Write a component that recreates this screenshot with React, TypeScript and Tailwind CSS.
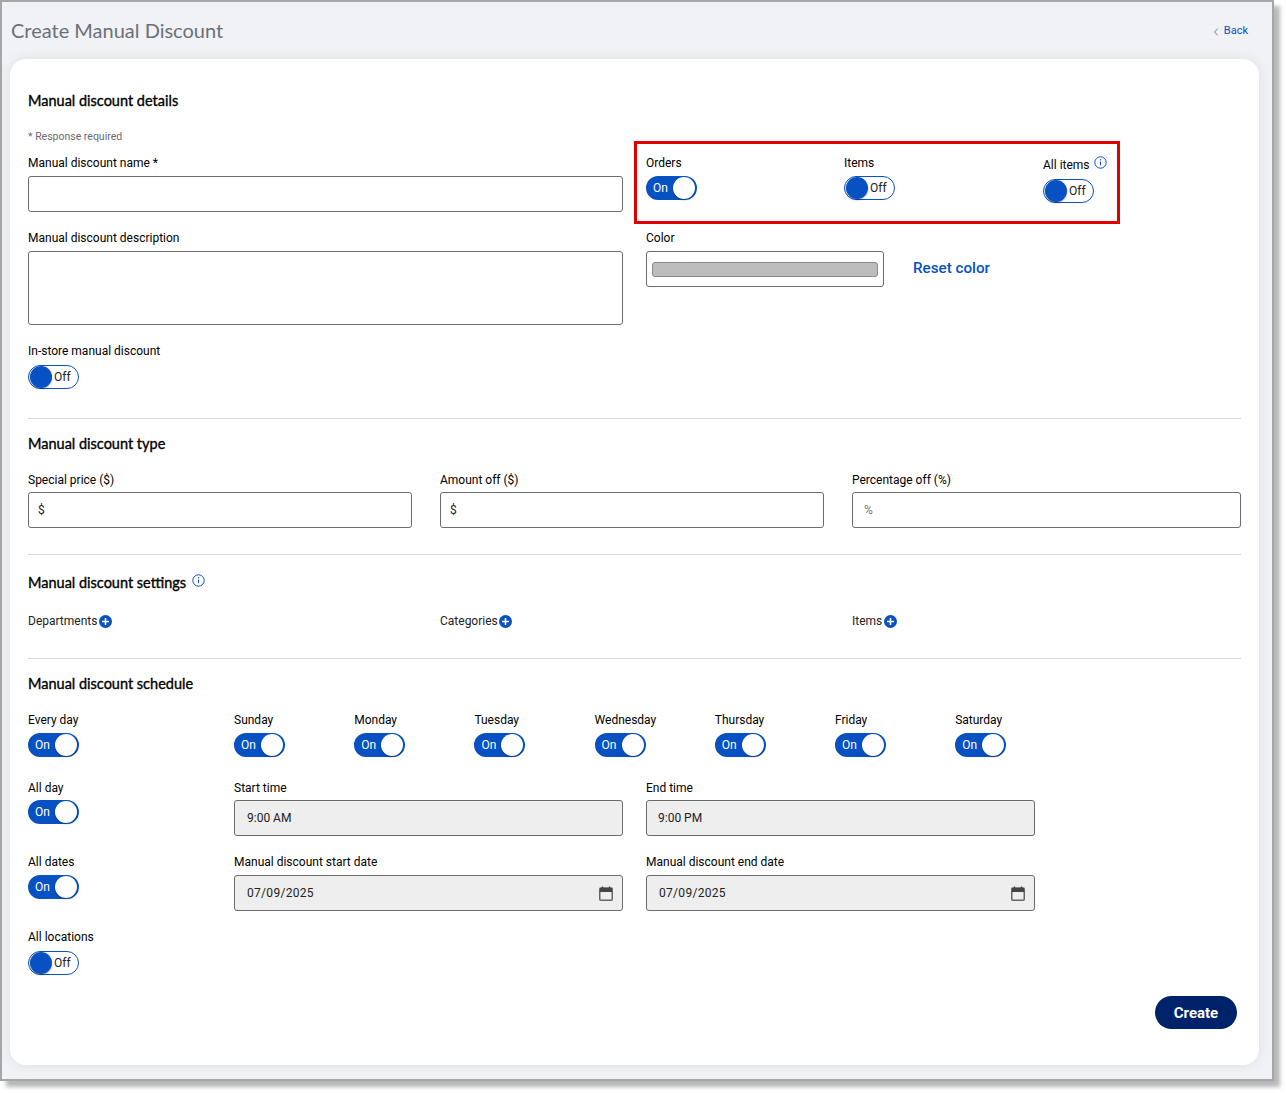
import { ChevronLeft } from "lucide-react";

const headingFont = "font-['Lato',sans-serif]";

function Toggle({ on }: { on: boolean }) {
  if (on) {
    return (
      <div className="flex h-[24px] w-[51px] items-center justify-between rounded-full border-2 border-[#0751c2] bg-[#0751c2] pl-[5px] text-[12px] text-white">
        <span>On</span>
        <span className="h-[22px] w-[22px] rounded-full bg-white shadow-[0_1px_2px_rgba(0,0,0,0.3)]" />
      </div>
    );
  }
  return (
    <div className="flex h-[24px] w-[51px] items-center gap-[2px] rounded-full border border-[#0751c2] bg-white pl-[1px] text-[12px] text-[#222]">
      <span className="h-[22px] w-[22px] rounded-full bg-[#0751c2] shadow-[0_1px_2px_rgba(0,0,0,0.3)]" />
      <span>Off</span>
    </div>
  );
}

function InfoIcon() {
  return (
    <svg width="13" height="13" viewBox="0 0 13 13" fill="none" className="text-[#0751c2]">
      <circle cx="6.5" cy="6.5" r="5.7" stroke="currentColor" />
      <path d="M6.5 5.6v3.6" stroke="currentColor" strokeWidth="1.1" />
      <circle cx="6.5" cy="3.8" r="0.7" fill="currentColor" />
    </svg>
  );
}

function PlusIcon() {
  return (
    <span className="flex h-[13px] w-[13px] items-center justify-center rounded-full bg-[#0751c2]">
      <svg width="9" height="9" viewBox="0 0 9 9">
        <path d="M4.5 1v7M1 4.5h7" stroke="white" strokeWidth="1.6" />
      </svg>
    </span>
  );
}

function CalendarIcon() {
  return (
    <svg width="14" height="15" viewBox="0 0 14 15" fill="none">
      <rect x="0.75" y="2" width="12.5" height="12.25" rx="1" stroke="#666" strokeWidth="1.5" />
      <rect x="1" y="2" width="12" height="4" fill="#444" />
      <path d="M3.5 0.5v2M10.5 0.5v2" stroke="#444" strokeWidth="1.4" />
    </svg>
  );
}

function Label({ children }: { children: React.ReactNode }) {
  return <div className="h-[14px] text-[12px] leading-[14px] text-black">{children}</div>;
}

function Field({ value, muted, disabled, calendar, className }: { value?: string; muted?: boolean; disabled?: boolean; calendar?: boolean; className?: string }) {
  return (
    <div
      className={`flex h-[36px] items-center justify-between rounded-[3px] border border-[#6b6b6b] pr-[9px] pl-[9px] text-[12px] ${disabled ? "bg-[#eeeeee]" : "bg-white"} ${muted ? "text-[#777]" : "text-[#222]"} ${className ?? ""}`}
    >
      <span>{value}</span>
      {calendar && <CalendarIcon />}
    </div>
  );
}

function Heading({ children }: { children: React.ReactNode }) {
  return <h2 className={`${headingFont} h-[20px] pt-[2px] text-[14.5px] leading-[18px] font-normal text-black [-webkit-text-stroke:0.35px_#000]`}>{children}</h2>;
}

const days = ["Sunday", "Monday", "Tuesday", "Wednesday", "Thursday", "Friday", "Saturday"];

export default function App() {
  return (
    <div className="h-[1093px] w-[1286px] bg-white font-['Roboto',sans-serif]">
      <div className="h-[1081px] w-[1274px] border-2 border-[#a6a6a6] bg-[#f0f2f6] px-[8px] shadow-[6px_6px_4px_rgba(0,0,0,0.28)]">
        <div className="flex h-[57px] items-center justify-between pr-[16px]">
          <h1 className={`${headingFont} pb-[2px] pl-[1px] text-[20px] text-[#6b7076]`}>Create Manual Discount</h1>
          <a className="mt-[2px] flex items-center gap-[2px] text-[11px] text-[#0751c2]">
            <ChevronLeft size={12} className="text-[#777]" />
            Back
          </a>
        </div>

        <div className="h-[1006px] w-[1249px] rounded-[16px] bg-white px-[18px] pt-[31px] shadow-[0_0_14px_rgba(0,0,0,0.08)]">
          <Heading>Manual discount details</Heading>

          <div className="grid grid-cols-[595px_1fr] gap-x-[23px]">
            <div>
              <div className="mt-[20px] text-[10.5px] leading-[14px] text-[#6b6b6b]">* Response required</div>
              <div className="mt-[12px]"><Label>Manual discount name *</Label></div>
              <Field className="mt-[6px]" />
            </div>
            <div className="mt-[31px] -mb-[12px] -ml-[12px] flex h-[83px] w-[486px] border-[3px] border-[#e00000] pt-[12px] pl-[9px]">
              <div className="w-[198px]">
                <Label>Orders</Label>
                <div className="mt-[6px]"><Toggle on /></div>
              </div>
              <div className="w-[199px]">
                <Label>Items</Label>
                <div className="mt-[6px]"><Toggle on={false} /></div>
              </div>
              <div>
                <div className="flex gap-[4px] pt-[2px]">
                  <Label>All items</Label>
                  <span className="-mt-[2px]"><InfoIcon /></span>
                </div>
                <div className="mt-[7px]"><Toggle on={false} /></div>
              </div>
            </div>
          </div>

          <div className="mt-[19px] grid grid-cols-[595px_1fr] gap-x-[23px]">
            <div>
              <Label>Manual discount description</Label>
              <div className="mt-[6px] h-[74px] rounded-[3px] border border-[#6b6b6b] bg-white" />
            </div>
            <div>
              <Label>Color</Label>
              <div className="mt-[6px] flex items-center gap-[29px]">
                <div className="flex h-[36px] w-[238px] items-center rounded-[3px] border border-[#6b6b6b] px-[5px]">
                  <div className="h-[15px] w-full rounded-[3px] border border-[#8a8a8a] bg-[#bdbdbd]" />
                </div>
                <a className="mb-[2px] text-[15.2px] font-medium text-[#0751c2]">Reset color</a>
              </div>
            </div>
          </div>

          <div className="mt-[19px]"><Label>In-store manual discount</Label></div>
          <div className="mt-[7px]"><Toggle on={false} /></div>

          <div className="mt-[29px] border-t border-[#d6d6d6] pt-[14px]">
            <Heading>Manual discount type</Heading>
          </div>
          <div className="mt-[20px] grid grid-cols-[384px_384px_389px] gap-x-[28px]">
            <div>
              <Label>Special price ($)</Label>
              <Field className="mt-[5px]" value="$" />
            </div>
            <div>
              <Label>Amount off ($)</Label>
              <Field className="mt-[5px]" value="$" />
            </div>
            <div>
              <Label>Percentage off (%)</Label>
              <Field className="mt-[5px] pl-[11px]" value="%" muted />
            </div>
          </div>

          <div className="mt-[26px] border-t border-[#d6d6d6] pt-[17px]">
            <div className="flex gap-[6px]">
              <Heading>Manual discount settings</Heading>
              <span className="mt-[2px]"><InfoIcon /></span>
            </div>
          </div>
          <div className="mt-[22px] grid grid-cols-[384px_384px_389px] gap-x-[28px] text-[12px] leading-[14px] text-[#222]">
            <div className="flex items-center gap-[2px]">Departments<PlusIcon /></div>
            <div className="flex items-center gap-[1px]">Categories<PlusIcon /></div>
            <div className="flex items-center gap-[2px]">Items<PlusIcon /></div>
          </div>

          <div className="mt-[30px] border-t border-[#d6d6d6] pt-[14px]">
            <Heading>Manual discount schedule</Heading>
          </div>

          <div className="mt-[20px] flex">
            <div className="w-[206px]">
              <Label>Every day</Label>
              <div className="mt-[6px]"><Toggle on /></div>
            </div>
            {days.map((d) => (
              <div key={d} className="w-[120.2px]">
                <Label>{d}</Label>
                <div className="mt-[6px]"><Toggle on /></div>
              </div>
            ))}
          </div>

          <div className="mt-[24px] flex">
            <div className="w-[206px]">
              <Label>All day</Label>
              <div className="mt-[5px]"><Toggle on /></div>
            </div>
            <div className="w-[389px]">
              <Label>Start time</Label>
              <Field className="mt-[5px] pl-[12px]" value="9:00 AM" disabled />
            </div>
            <div className="ml-[23px] w-[389px]">
              <Label>End time</Label>
              <Field className="mt-[5px] pl-[11px]" value="9:00 PM" disabled />
            </div>
          </div>

          <div className="mt-[19px] flex">
            <div className="w-[206px]">
              <Label>All dates</Label>
              <div className="mt-[6px]"><Toggle on /></div>
            </div>
            <div className="w-[389px]">
              <Label>Manual discount start date</Label>
              <Field className="mt-[6px] pl-[12px] tracking-[0.3px]" value="07/09/2025" disabled calendar />
            </div>
            <div className="ml-[23px] w-[389px]">
              <Label>Manual discount end date</Label>
              <Field className="mt-[6px] pl-[12px] tracking-[0.3px]" value="07/09/2025" disabled calendar />
            </div>
          </div>

          <div className="mt-[19px]"><Label>All locations</Label></div>
          <div className="mt-[7px]"><Toggle on={false} /></div>

          <div className="mt-[21px] flex justify-end pr-[4px]">
            <button className="h-[33px] w-[82px] rounded-full bg-[#00226b] pt-[2px] text-[15px] font-bold text-white">Create</button>
          </div>
        </div>
      </div>
    </div>
  );
}
